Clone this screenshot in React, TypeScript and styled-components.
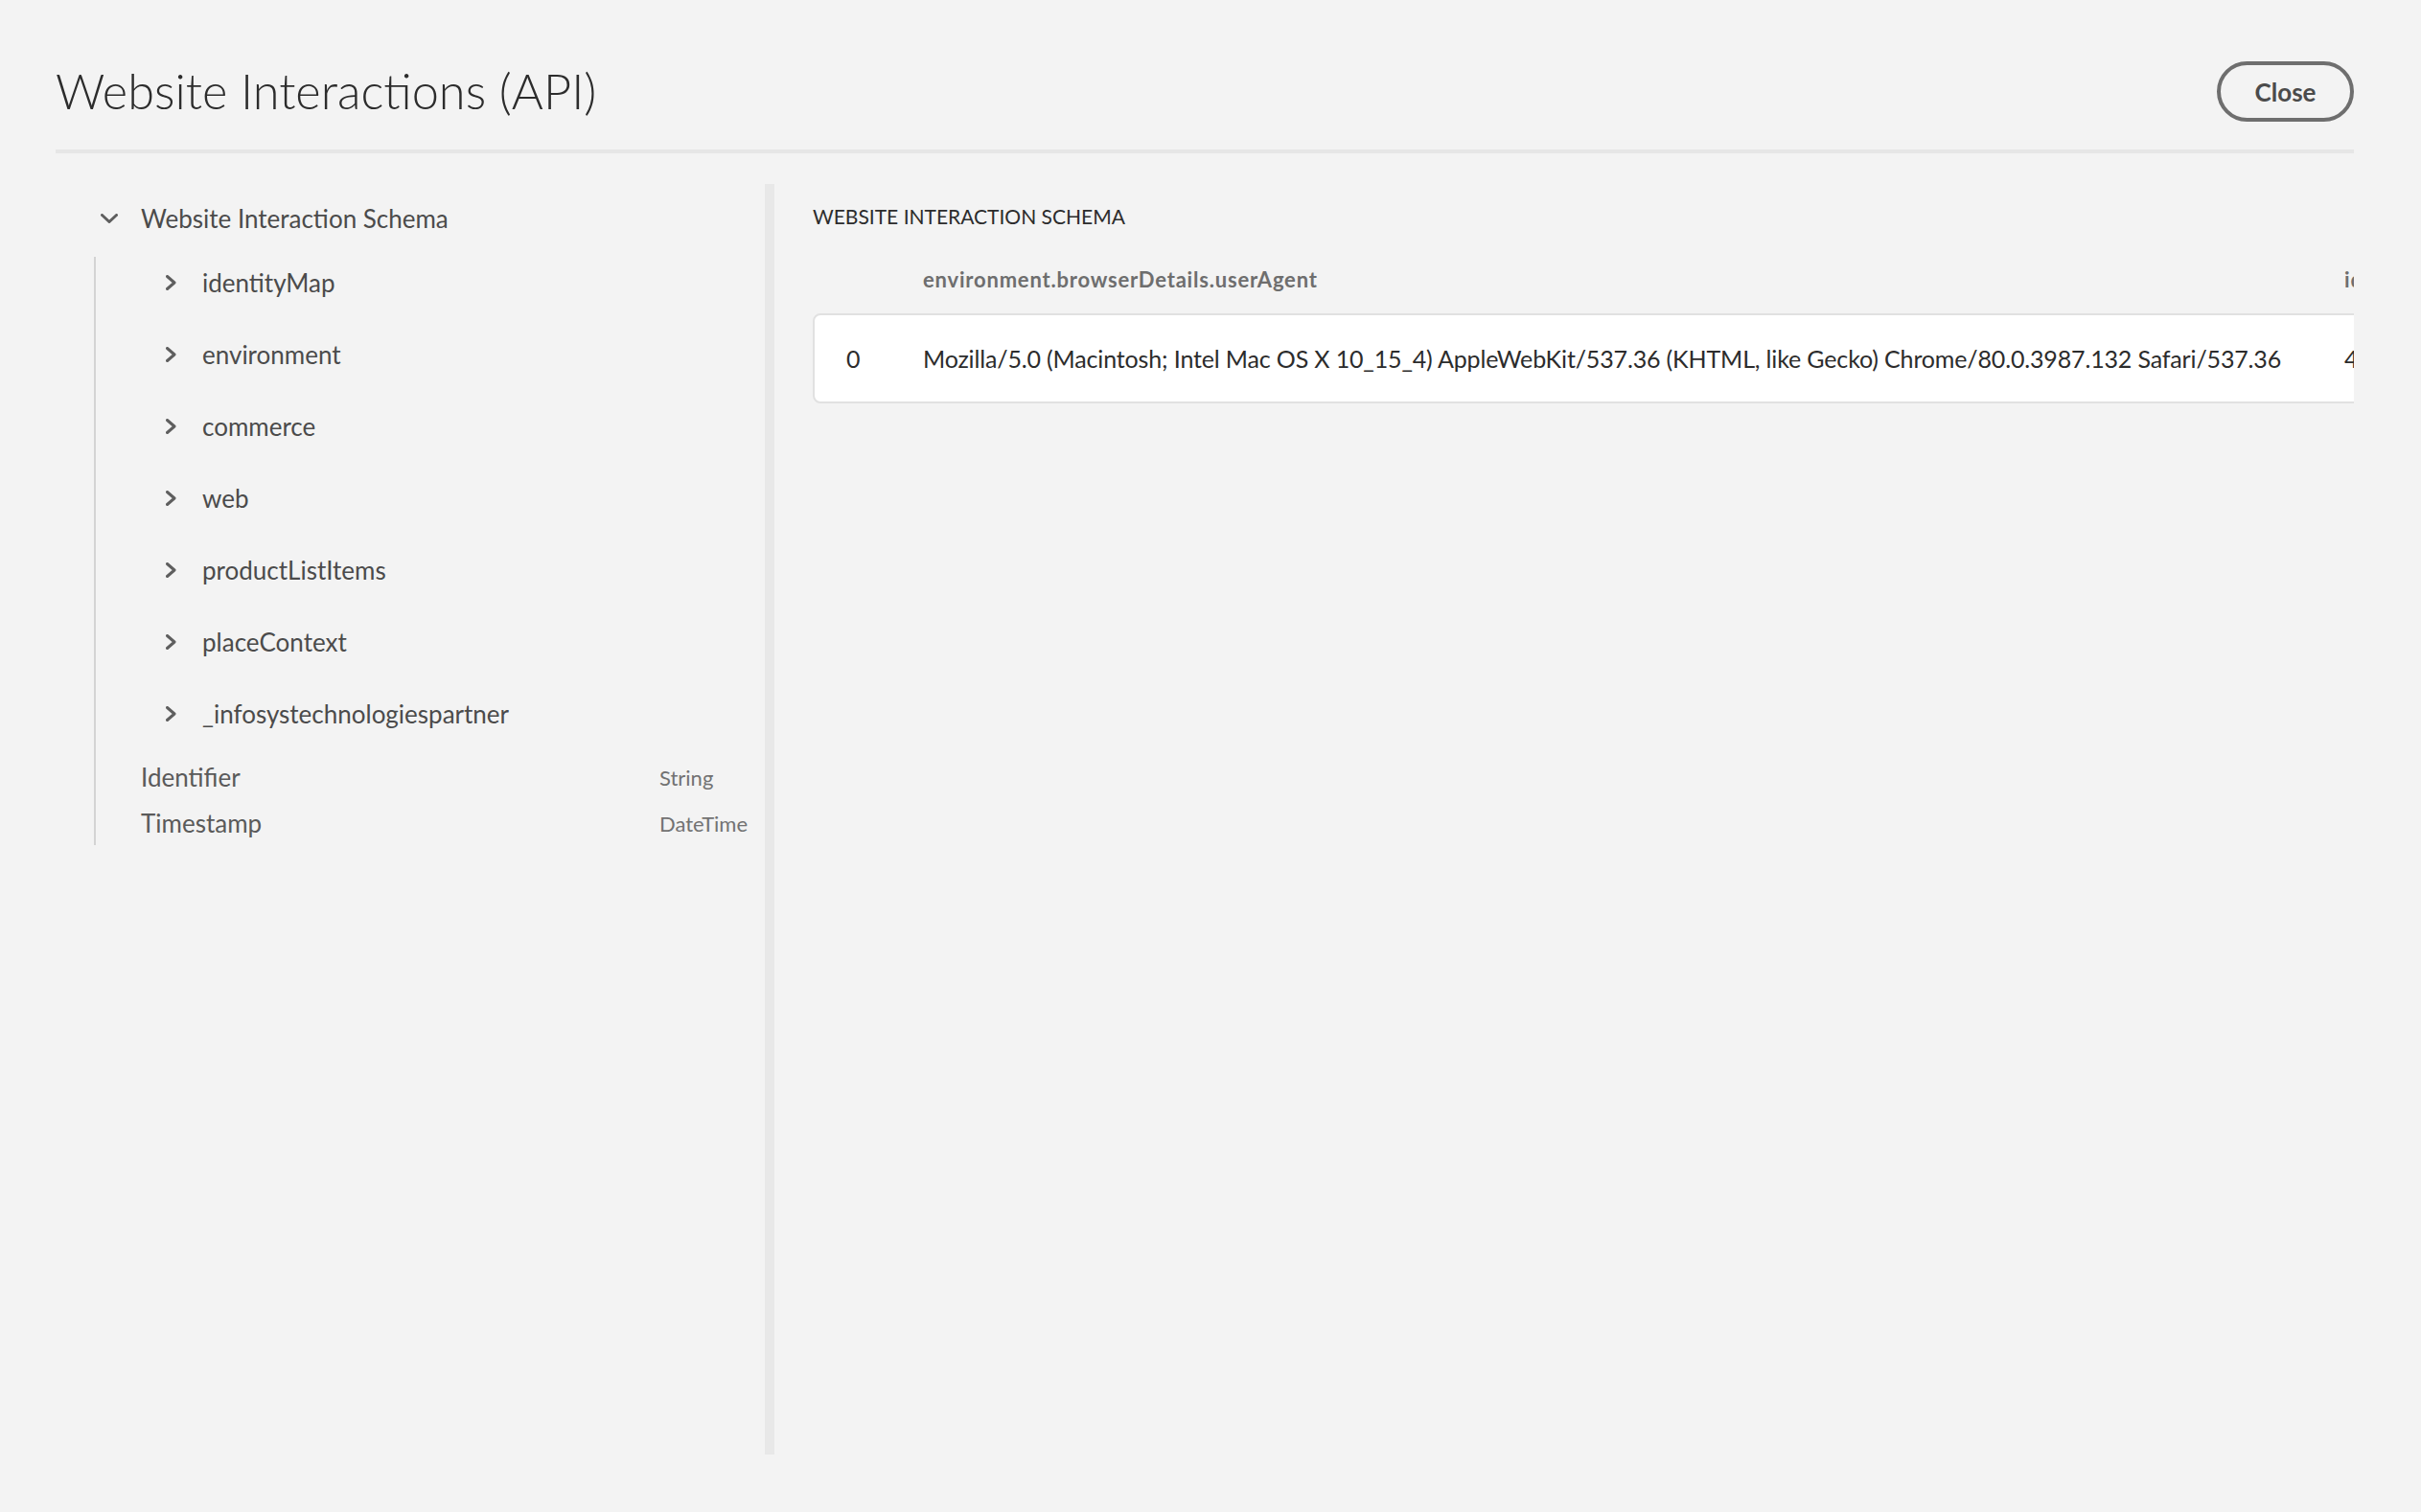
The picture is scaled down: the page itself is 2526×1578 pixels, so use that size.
import React from 'react';
import styled, { createGlobalStyle } from 'styled-components';

const GlobalStyle = createGlobalStyle`
  html, body {
    margin: 0;
    padding: 0;
    background: #f3f3f3;
  }
  body {
    font-family: Lato, "Open Sans", sans-serif;
    color: #2c2c2c;
  }
  * {
    box-sizing: border-box;
  }
`;

const Page = styled.div`
  width: 2526px;
  height: 1578px;
  padding: 64px 70px 0 58px;
  display: flex;
  flex-direction: column;
  overflow: hidden;
`;

const Header = styled.header`
  display: flex;
  align-items: center;
  justify-content: space-between;
  height: 63px;
`;

const Title = styled.h1`
  margin: 0;
  font-size: 50.5px;
  font-weight: 300;
  line-height: 1;
  color: #2c2c2c;
`;

const CloseButton = styled.button`
  width: 143px;
  height: 63px;
  padding: 0;
  border: 4px solid #6e6e6e;
  border-radius: 32px;
  background: transparent;
  font-family: inherit;
  font-size: 26px;
  font-weight: 700;
  color: #4b4b4b;
`;

const Rule = styled.div`
  margin-top: 29px;
  height: 4px;
  background: #e6e6e6;
`;

const Body = styled.div`
  display: flex;
  margin-top: 32px;
  height: 1326px;
`;

const TreePanel = styled.nav`
  width: 740px;
  flex: none;
`;

const ScrollTrack = styled.div`
  width: 10px;
  flex: none;
  background: #e8e8e8;
`;

const ResultPanel = styled.section`
  flex: 1;
  min-width: 0;
  overflow: hidden;
  padding-left: 40px;
`;

/* tree */

const RootRow = styled.div`
  display: flex;
  align-items: center;
  height: 72px;
  padding-left: 47px;
  font-size: 26px;
  color: #4b4b4b;
`;

const ChildList = styled.div`
  margin: 4px 0 0 40px;
  padding: 4px 0 3px;
  border-left: 2px solid #d3d3d3;
  display: flex;
  flex-direction: column;
`;

const BranchRow = styled.div`
  display: flex;
  align-items: center;
  height: 46px;
  padding-left: 73px;
  font-size: 26px;
  color: #4b4b4b;

  & + & {
    margin-top: 29px;
  }
`;

const FieldRow = styled.div<{ $first?: boolean }>`
  display: grid;
  grid-template-columns: 541px auto;
  align-items: center;
  height: 40px;
  margin-top: ${(p) => (p.$first ? '23px' : '8px')};
  padding-left: 47px;
`;

const FieldName = styled.span`
  font-size: 26px;
  color: #5a5a5a;
`;

const FieldType = styled.span`
  font-size: 22px;
  color: #727272;
`;

const Icon = styled.svg<{ $gap: number }>`
  flex: none;
  margin-right: ${(p) => p.$gap}px;
  fill: none;
  stroke: #5e5e5e;
  stroke-width: 3;
  stroke-linecap: round;
  stroke-linejoin: round;
`;

const ChevronDown = () => (
  <Icon $gap={24} width="18" height="10" viewBox="0 0 18 10">
    <path d="M1.5 1.5 L9 8.5 L16.5 1.5" />
  </Icon>
);

const ChevronRight = () => (
  <Icon $gap={27} width="11" height="16" viewBox="0 0 11 16">
    <path d="M1.5 1.5 L9 8 L1.5 14.5" />
  </Icon>
);

/* results */

const SectionLabel = styled.div`
  margin-top: 19px;
  font-size: 21px;
  line-height: 30px;
  text-transform: uppercase;
  color: #2c2c2c;
`;

const Table = styled.div`
  width: max-content;
  margin-top: 36px;
`;

const columns = '113px 1483px 600px';

const HeadRow = styled.div`
  display: grid;
  grid-template-columns: ${columns};
  border: solid transparent;
  border-width: 0 2px;
  font-size: 22px;
  font-weight: 700;
  line-height: 30px;
  letter-spacing: 0.8px;
  color: #6e6e6e;
`;

const DataRow = styled.div`
  display: grid;
  grid-template-columns: ${columns};
  align-items: center;
  height: 94px;
  margin-top: 20px;
  background: #fff;
  border: 2px solid #e1e1e1;
  border-radius: 8px;
  font-size: 25px;
  letter-spacing: -0.15px;
  color: #2c2c2c;
`;

const IndexCell = styled.div`
  padding-left: 33px;
`;

const Cell = styled.div`
  white-space: nowrap;
`;

const branches = [
  'identityMap',
  'environment',
  'commerce',
  'web',
  'productListItems',
  'placeContext',
  '_infosystechnologiespartner',
];

const fields = [
  { name: 'Identifier', type: 'String' },
  { name: 'Timestamp', type: 'DateTime' },
];

const userAgent =
  'Mozilla/5.0 (Macintosh; Intel Mac OS X 10_15_4) AppleWebKit/537.36 (KHTML, like Gecko) Chrome/80.0.3987.132 Safari/537.36';

const App = (): JSX.Element => (
  <>
    <GlobalStyle />
    <Page>
      <Header>
        <Title>Website Interactions (API)</Title>
        <CloseButton>Close</CloseButton>
      </Header>
      <Rule />
      <Body>
        <TreePanel>
          <RootRow>
            <ChevronDown />
            Website Interaction Schema
          </RootRow>
          <ChildList>
            {branches.map((b) => (
              <BranchRow key={b}>
                <ChevronRight />
                {b}
              </BranchRow>
            ))}
            {fields.map((f, i) => (
              <FieldRow key={f.name} $first={i === 0}>
                <FieldName>{f.name}</FieldName>
                <FieldType>{f.type}</FieldType>
              </FieldRow>
            ))}
          </ChildList>
        </TreePanel>
        <ScrollTrack />
        <ResultPanel>
          <SectionLabel>Website Interaction Schema</SectionLabel>
          <Table>
            <HeadRow>
              <span />
              <Cell>environment.browserDetails.userAgent</Cell>
              <Cell>identityMap.ECID.id</Cell>
            </HeadRow>
            <DataRow>
              <IndexCell>0</IndexCell>
              <Cell>{userAgent}</Cell>
              <Cell>43071829164273918546317462980142</Cell>
            </DataRow>
          </Table>
        </ResultPanel>
      </Body>
    </Page>
  </>
);

export default App;
